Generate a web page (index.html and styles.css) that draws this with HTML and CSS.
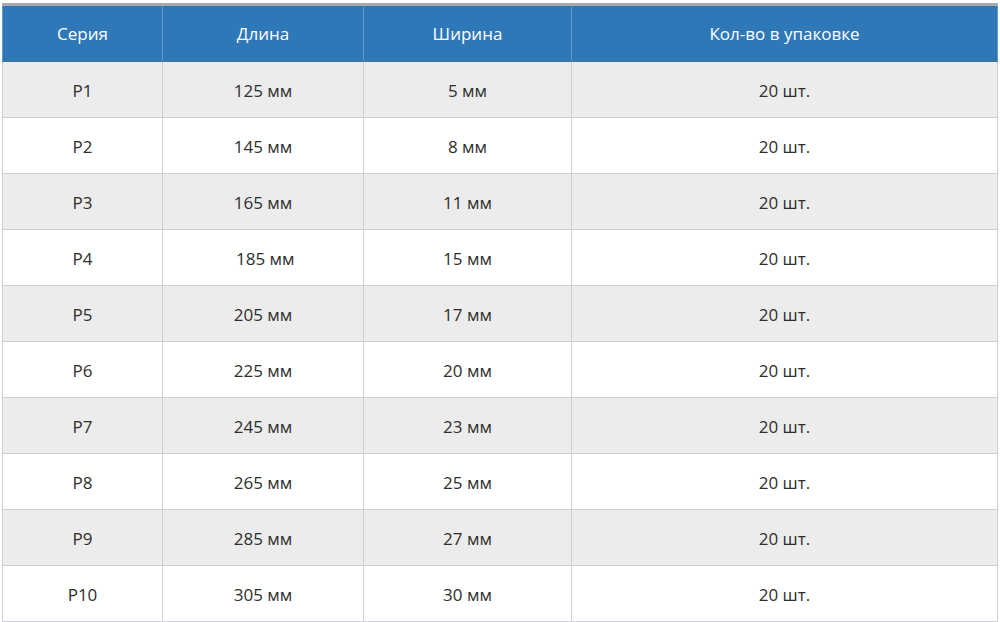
FILE: index.html
```html
<!DOCTYPE html>
<html lang="ru">
<head>
<meta charset="utf-8">
<link rel="stylesheet" href="styles.css">
</head>
<body>
<div class="wrap">
<table class="spec">
<colgroup>
<col class="c1"><col class="c2"><col class="c3"><col class="c4">
</colgroup>
<thead>
<tr><th>Серия</th><th>Длина</th><th>Ширина</th><th>Кол-во в упаковке</th></tr>
</thead>
<tbody>
<tr><td>P1</td><td>125 мм</td><td>5 мм</td><td>20 шт.</td></tr>
<tr><td>P2</td><td>145 мм</td><td>8 мм</td><td>20 шт.</td></tr>
<tr><td>P3</td><td>165 мм</td><td>11 мм</td><td>20 шт.</td></tr>
<tr><td>P4</td><td>&nbsp;185 мм</td><td>15 мм</td><td>20 шт.</td></tr>
<tr><td>P5</td><td>205 мм</td><td>17 мм</td><td>20 шт.</td></tr>
<tr><td>P6</td><td>225 мм</td><td>20 мм</td><td>20 шт.</td></tr>
<tr><td>P7</td><td>245 мм</td><td>23 мм</td><td>20 шт.</td></tr>
<tr><td>P8</td><td>265 мм</td><td>25 мм</td><td>20 шт.</td></tr>
<tr><td>P9</td><td>285 мм</td><td>27 мм</td><td>20 шт.</td></tr>
<tr><td>P10</td><td>305 мм</td><td>30 мм</td><td>20 шт.</td></tr>
</tbody>
</table>
</div>
</body>
</html>
```
FILE: styles.css
```css
html, body {
  margin: 0;
  padding: 0;
  background: #ffffff;
}
.wrap {
  padding: 3px 3px 0 2px;
}
.spec {
  width: 995px;
  border-collapse: collapse;
  table-layout: fixed;
  font-family: "Open Sans", "Noto Sans", sans-serif;
  border-top: 3px solid #a7aaad;
}
.c1 { width: 160px; }
.c2 { width: 201px; }
.c3 { width: 208px; }
.c4 { width: 426px; }
.spec th {
  height: 55px;
  padding: 0;
  background: #2f78b7;
  color: #ffffff;
  font-weight: normal;
  font-size: 17px;
  text-align: center;
  border-left: 1px solid #5d9ad0;
  border-right: 1px solid #5d9ad0;
  border-bottom: 1px solid #4a6f8f;
}
.spec td {
  height: 53px;
  padding: 2px 0 0 0;
  color: #2e2e2e;
  font-size: 17px;
  text-align: center;
  border: 1px solid #cdd1d5;
}
.spec tbody tr:nth-child(odd) td {
  background: #ececec;
}
.spec tbody tr:nth-child(even) td {
  background: #ffffff;
}
```
